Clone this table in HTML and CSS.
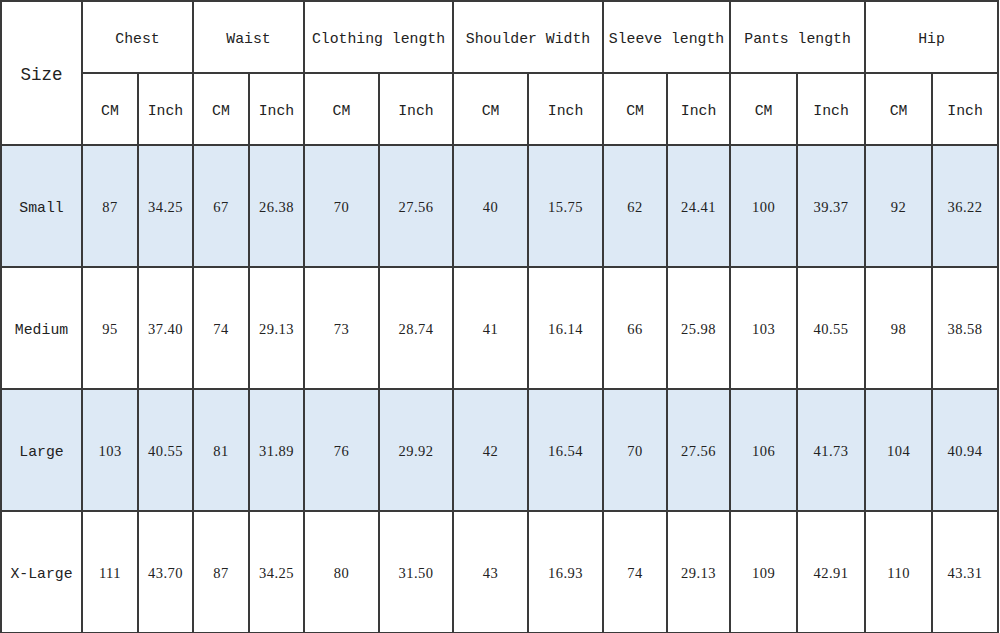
FILE: index.html
```html
<!DOCTYPE html>
<html>
<head>
<meta charset="utf-8">
<link rel="stylesheet" href="styles.css">
</head>
<body>
<table class="sizes">
  <colgroup>
    <col class="c-size">
    <col class="c56"><col class="c55"><col class="c56"><col class="c55">
    <col class="c75"><col class="c74"><col class="c75"><col class="c75">
    <col class="c64"><col class="c63"><col class="c67"><col class="c68">
    <col class="c67"><col class="c66">
  </colgroup>
  <thead>
    <tr class="h1">
      <th rowspan="2" class="size-head">Size</th>
      <th colspan="2">Chest</th>
      <th colspan="2">Waist</th>
      <th colspan="2">Clothing length</th>
      <th colspan="2">Shoulder Width</th>
      <th colspan="2">Sleeve length</th>
      <th colspan="2">Pants length</th>
      <th colspan="2">Hip</th>
    </tr>
    <tr class="h2">
      <th>CM</th><th>Inch</th><th>CM</th><th>Inch</th><th>CM</th><th>Inch</th><th>CM</th><th>Inch</th>
      <th>CM</th><th>Inch</th><th>CM</th><th>Inch</th><th>CM</th><th>Inch</th>
    </tr>
  </thead>
  <tbody>
    <tr class="row blue">
      <th class="label">Small</th>
      <td>87</td><td>34.25</td><td>67</td><td>26.38</td><td>70</td><td>27.56</td><td>40</td><td>15.75</td>
      <td>62</td><td>24.41</td><td>100</td><td>39.37</td><td>92</td><td>36.22</td>
    </tr>
    <tr class="row">
      <th class="label">Medium</th>
      <td>95</td><td>37.40</td><td>74</td><td>29.13</td><td>73</td><td>28.74</td><td>41</td><td>16.14</td>
      <td>66</td><td>25.98</td><td>103</td><td>40.55</td><td>98</td><td>38.58</td>
    </tr>
    <tr class="row blue">
      <th class="label">Large</th>
      <td>103</td><td>40.55</td><td>81</td><td>31.89</td><td>76</td><td>29.92</td><td>42</td><td>16.54</td>
      <td>70</td><td>27.56</td><td>106</td><td>41.73</td><td>104</td><td>40.94</td>
    </tr>
    <tr class="row">
      <th class="label">X-Large</th>
      <td>111</td><td>43.70</td><td>87</td><td>34.25</td><td>80</td><td>31.50</td><td>43</td><td>16.93</td>
      <td>74</td><td>29.13</td><td>109</td><td>42.91</td><td>110</td><td>43.31</td>
    </tr>
  </tbody>
</table>
</body>
</html>
```
FILE: styles.css
```css
html, body {
  margin: 0;
  padding: 0;
  background: #ffffff;
}

.sizes {
  border-collapse: collapse;
  table-layout: fixed;
  width: 998px;
  color: #222222;
  font-family: "Liberation Mono", "DejaVu Sans Mono", monospace;
}

.c-size { width: 81px; }
.c55 { width: 55px; }
.c56 { width: 56px; }
.c63 { width: 63px; }
.c64 { width: 64px; }
.c66 { width: 66px; }
.c67 { width: 67px; }
.c68 { width: 68px; }
.c74 { width: 74px; }
.c75 { width: 75px; }

.sizes th,
.sizes td {
  border: 2px solid #3a3a3a;
  padding: 0;
  text-align: center;
  vertical-align: middle;
  font-weight: normal;
  white-space: nowrap;
  overflow: hidden;
}

.h1 th,
.h2 th {
  height: 66px;
  padding-top: 4px;
  font-size: 14.8px;
}

.sizes .size-head {
  font-size: 17.5px;
  padding-top: 4px;
}

.row th,
.row td {
  height: 117px;
  padding-top: 3px;
}

.row .label {
  font-size: 14.8px;
}

.row td {
  font-family: "Liberation Serif", "DejaVu Serif", serif;
  font-size: 14.5px;
  letter-spacing: 0.5px;
}

.blue th,
.blue td {
  background: #dde9f5;
}
```
